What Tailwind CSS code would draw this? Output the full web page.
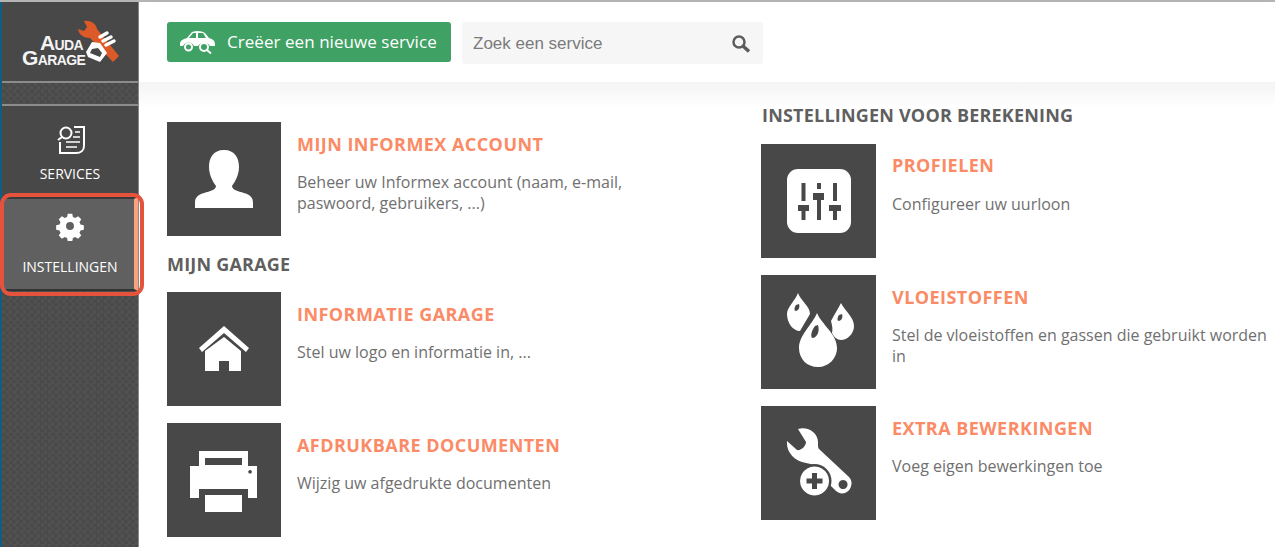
<!DOCTYPE html>
<html lang="en">

<head>
    <meta charset="UTF-8" />
    <meta name="viewport" content="width=device-width, initial-scale=1.0" />
    <script src="https://cdn.jsdelivr.net/npm/@tailwindcss/browser@4"></script>
    <title>Instellingen</title>
</head>

<body class="bg-white h-[547px] overflow-hidden font-['Open_Sans',sans-serif]">
    <div class="h-[2px] bg-[#b5b5b5]"></div>
    <div class="flex h-[545px] relative">
        <!-- sidebar -->
        <aside class="w-[139px] shrink-0 border-l-2 border-l-[#0f5d80] border-r border-r-[#8a8a8a] bg-[#4d4d4d] bg-[repeating-conic-gradient(#4a4a4a_0_25%,#505050_0_50%)] bg-[length:7px_7px] flex flex-col">
            <div class="h-[81px] bg-[#484848] relative border-b-2 border-b-[#8c8c8c]">
                <div class="absolute left-[20px] top-[30px] text-[#f4f4f4] font-['Liberation_Sans',sans-serif] font-bold leading-none">
                    <div class="pl-[18px] text-[14px] h-[15px] tracking-[-0.6px]"><span class="text-[21px]">A</span>UDA</div>
                    <div class="text-[14px] tracking-[-0.6px]"><span class="text-[21px]">G</span>ARAGE</div>
                </div>
                <svg class="absolute left-[74px] top-[17px]" width="46" height="46" viewBox="0 0 46 46">
                    <path d="M8 2 C14 1 20 4 21 10 L43 37 L37 43 L14 19 C8 19 3 16 2 10 L8 12 L11 8 Z" fill="#dc5a27" />
                    <path d="M24 18 L31 14 M27 22 L35 18 M30 26 L38 22" stroke="#fff" stroke-width="3.500" stroke-linecap="round" fill="none" />
                    <path d="M10 33 L16 23 L24 24 L31 34 L24 43 L12 38 Z M16 30 L14 34 L24 38 L26 34 L22 29 Z" fill="#fff" fill-rule="evenodd" />
                </svg>
            </div>
            <div class="h-[21px]"></div>
            <div class="h-[93px] bg-[#484848] border-t-2 border-t-[#8c8c8c] flex flex-col items-center">
                <svg class="mt-[20px] ml-[2px]" width="28" height="28" viewBox="0 0 28 28" fill="none" stroke="#fff" stroke-width="2">
                    <path d="M17 1 H27 V20 C27 24 24 27 19 27 H3 V16" />
                    <circle cx="9" cy="7" r="5.500" />
                    <path d="M5 11 L1 14" />
                    <path d="M18 6 H23 M16 11 H23 M9 16 H23 M9 21 H20" stroke-width="1.500" />
                </svg>
                <span class="mt-[11px] text-[14px] leading-[18px] text-white">SERVICES</span>
            </div>
            <div class="h-[94px] bg-[#606060] border-t-2 border-t-[#3a3a3a] border-b-2 border-b-[#333] border-r-[4px] border-r-[#fba27d] pl-[4px] flex flex-col items-center">
                <svg class="mt-[12px]" width="30" height="30" viewBox="0 0 24 24" fill="#fff">
                    <path fill-rule="evenodd" d="M10 1 h4 l.6 3 a8 8 0 0 1 2 .9 l2.6-1.6 2.8 2.8-1.6 2.6 a8 8 0 0 1 .9 2 l3 .6 v4 l-3 .6 a8 8 0 0 1-.9 2 l1.6 2.6-2.8 2.8-2.6-1.6 a8 8 0 0 1-2 .9 l-.6 3 h-4 l-.6-3 a8 8 0 0 1-2-.9 l-2.6 1.6-2.8-2.8 1.6-2.6 a8 8 0 0 1-.9-2 l-3-.6 v-4 l3-.6 a8 8 0 0 1 .9-2 L2 6.1 4.8 3.3l2.6 1.6 a8 8 0 0 1 2-.9z M12 8.5 a3.5 3.5 0 1 0 0 7 a3.5 3.5 0 0 0 0-7z" transform="translate(1.2 1.2) scale(.9)" />
                </svg>
                <span class="mt-[17px] text-[14px] leading-[18px] text-white">INSTELLINGEN</span>
            </div>
        </aside>
        <!-- red annotation round the active item -->
        <div class="absolute left-0 top-[191px] w-[144px] h-[103px] border-[4px] border-[#e5533d] rounded-[11px]"></div>

        <div class="flex-1 min-w-0">
            <header class="h-[80px] flex items-start gap-[11px] pl-[28px] pt-[20px] shadow-[0_6px_12px_rgba(0,0,0,0.07)]">
                <button class="w-[284px] h-[40px] bg-[#3fa164] rounded-[3px] flex items-center pl-[12px] gap-[11px] text-white text-[17px] tracking-[0.05px]">
                    <svg width="37" height="24" viewBox="0 0 37 24" fill="#fff">
                        <path fill-rule="evenodd" d="M1 14 C1 10 5 9 8 8 L13 2 C18 0 23 1 26 3 L30 8 C34 9 36 11 36 14 L36 16 H31 A7 7 0 0 0 19 16 H15 A6 6 0 0 0 4 16 H1 Z M14 3 L10 8 H17 V3 Z M19 3 V8 H27 L24 3 Z" />
                        <circle cx="9.500" cy="17" r="3.500" fill="none" stroke="#fff" stroke-width="2" />
                        <circle cx="25" cy="17" r="4" fill="none" stroke="#fff" stroke-width="2" />
                        <path d="M28 20 L32 23.500" stroke="#fff" stroke-width="2" />
                    </svg>
                    <span>Creëer een nieuwe service</span>
                </button>
                <div class="w-[301px] h-[42px] bg-[#f6f6f6] rounded-[3px] flex items-center justify-between pl-[11px] pr-[12px] pt-[1px]">
                    <span class="text-[17px] text-[#7b7b7b] font-['Liberation_Sans',sans-serif]">Zoek een service</span>
                    <svg width="20" height="20" viewBox="0 0 20 20" fill="none" stroke="#5c5c5c">
                        <circle cx="8" cy="8" r="5.500" stroke-width="2.500" />
                        <path d="M12 12 L18 17.500" stroke-width="3.500" />
                    </svg>
                </div>
            </header>

            <main class="flex pl-[28px] bg-[linear-gradient(#f4f4f4,#ffffff_26px)] h-[465px]">
                <!-- left column -->
                <div class="w-[594px] shrink-0 pt-[40px] flex flex-col">
                    <a class="flex gap-[16px]">
                        <div class="w-[114px] h-[114px] bg-[#484848] flex items-center justify-center shrink-0 pt-[2px]">
                            <svg width="62" height="62" viewBox="0 0 62 62" fill="#fff">
                                <path d="M31 1 C20 1 16 9 16 18 C16 26 20 33 23 37 C23 41 17 42 11 44 C4 46 2 49 2 54 V59 H60 V54 C60 49 58 46 51 44 C45 42 39 41 39 37 C42 33 46 26 46 18 C46 9 42 1 31 1 Z" />
                            </svg>
                        </div>
                        <div class="w-[330px]">
                            <h2 class="mt-[9px] text-[18px] leading-[26px] font-bold text-[#fb8a66] tracking-[0.45px]">MIJN INFORMEX ACCOUNT</h2>
                            <p class="mt-[15px] text-[16px] leading-[21px] text-[#707070]">Beheer uw Informex account (naam, e-mail, paswoord, gebruikers, ...)</p>
                        </div>
                    </a>
                    <h3 class="mt-[15px] mb-[15px] text-[18px] leading-[26px] font-bold text-[#5f5f5f] tracking-[0.2px]">MIJN GARAGE</h3>
                    <a class="flex gap-[16px]">
                        <div class="w-[114px] h-[114px] bg-[#484848] flex items-center justify-center shrink-0">
                            <svg width="50" height="46" viewBox="0 0 50 46" fill="#fff">
                                <path d="M25 0 L50 22 L47 26 L25 7 L3 26 L0 22 Z" />
                                <path fill-rule="evenodd" d="M25 11 L42 25 V45 H30 V35 H20 V45 H6 V25 Z" />
                            </svg>
                        </div>
                        <div class="w-[330px]">
                            <h2 class="mt-[9px] text-[18px] leading-[26px] font-bold text-[#fb8a66] tracking-[0.45px]">INFORMATIE GARAGE</h2>
                            <p class="mt-[15px] text-[16px] leading-[21px] text-[#707070]">Stel uw logo en informatie in, ...</p>
                        </div>
                    </a>
                    <a class="flex gap-[16px] mt-[17px]">
                        <div class="w-[114px] h-[114px] bg-[#484848] flex items-center justify-center shrink-0 pt-[4px]">
                            <svg width="68" height="62" viewBox="0 0 68 62" fill="#fff">
                                <path fill-rule="evenodd" d="M9 0 H58 V15 H67 V47 H58 V38 H9 V47 H0 V15 H9 Z M15 7 V14 H52 V7 Z M60 19 a1.800 1.800 0 1 0 .1 0 Z" />
                                <rect x="15" y="44" width="37" height="17" />
                            </svg>
                        </div>
                        <div class="w-[330px]">
                            <h2 class="mt-[9px] text-[18px] leading-[26px] font-bold text-[#fb8a66] tracking-[0.45px]">AFDRUKBARE DOCUMENTEN</h2>
                            <p class="mt-[15px] text-[16px] leading-[21px] text-[#707070]">Wijzig uw afgedrukte documenten</p>
                        </div>
                    </a>
                </div>
                <!-- right column -->
                <div class="flex-1 min-w-0 pt-[20px] flex flex-col">
                    <h3 class="mb-[16px] pl-[1px] text-[18px] leading-[26px] font-bold text-[#5f5f5f] tracking-[0.2px]">INSTELLINGEN VOOR BEREKENING</h3>
                    <a class="flex gap-[16px]">
                        <div class="w-[115px] h-[114px] bg-[#484848] flex items-center justify-center shrink-0">
                            <svg width="64" height="64" viewBox="0 0 64 64">
                                <rect width="64" height="64" rx="11" fill="#fff" />
                                <g fill="#484848">
                                    <rect x="14.500" y="14" width="4" height="18" />
                                    <rect x="11" y="36" width="11" height="6" />
                                    <rect x="14.500" y="42" width="4" height="9" />
                                    <rect x="30" y="14" width="4" height="6" />
                                    <rect x="26" y="24" width="11" height="7" />
                                    <rect x="30" y="31" width="4" height="20" />
                                    <rect x="46" y="14" width="4" height="18" />
                                    <rect x="42" y="36" width="12" height="6" />
                                    <rect x="46" y="42" width="4" height="9" />
                                </g>
                            </svg>
                        </div>
                        <div class="flex-1 min-w-0">
                            <h2 class="mt-[8px] text-[18px] leading-[26px] font-bold text-[#fb8a66] tracking-[0.45px]">PROFIELEN</h2>
                            <p class="mt-[16px] text-[16px] leading-[21px] text-[#707070]">Configureer uw uurloon</p>
                        </div>
                    </a>
                    <a class="flex gap-[16px] mt-[17px]">
                        <div class="w-[115px] h-[114px] bg-[#484848] flex items-center justify-center shrink-0 pl-[4px] pb-[3px]">
                            <svg width="67" height="75" viewBox="0 0 67 75" fill="#fff">
                                <path fill-rule="evenodd" d="M11 0 C13 7 23 13 23 21 L13 38 C6 38 0 30 0 21 C0 14 8 8 11 0 Z M9 12 C7 15 7 18 9 18 C12 17 13 14 12 11 Z" />
                                <path fill-rule="evenodd" d="M54 10 C58 18 67 24 67 33 C67 41 60 47 54 47 C50 47 47 44 45 40 C46 36 45 32 44 28 C47 22 51 16 54 10 Z M52 22 C50 25 50 28 52 28 C55 27 56 24 55 21 Z" />
                                <path fill-rule="evenodd" d="M30 20 C35 32 50 41 50 55 C50 66 41 74 31 74 C20 74 12 66 12 55 C12 42 25 32 30 20 Z M28 33 C24 38 23 45 26 45 C30 44 33 39 31 32 Z" />
                            </svg>
                        </div>
                        <div class="flex-1 min-w-0">
                            <h2 class="mt-[9px] text-[18px] leading-[26px] font-bold text-[#fb8a66] tracking-[0.45px]">VLOEISTOFFEN</h2>
                            <p class="mt-[15px] text-[16px] leading-[21px] text-[#707070]">Stel de vloeistoffen en gassen die gebruikt worden in</p>
                        </div>
                    </a>
                    <a class="flex gap-[16px] mt-[17px]">
                        <div class="w-[115px] h-[114px] bg-[#484848] flex items-center justify-center shrink-0">
                            <svg width="66" height="72" viewBox="0 0 66 72" fill="#fff">
                                <path fill-rule="evenodd" d="M12 2 C22 -1 33 6 32 17 C32 19 32 21 33 22 L63 50 C68 55 65 64 59 66 C55 67 52 66 49 63 L40 54 C38 44 30 37 20 36 C8 34 0 25 1 14 L11 23 C15 24 20 19 20 15 Z M57 53 a4.500 4.500 0 1 0 .1 0 Z" />
                                <circle cx="28.500" cy="54" r="17" fill="#484848" />
                                <path fill-rule="evenodd" d="M28.500 39.500 A14.500 14.500 0 1 0 28.600 39.500 Z M26 46 H31 V51.500 H36.500 V56.500 H31 V62 H26 V56.500 H20.500 V51.500 H26 Z" />
                            </svg>
                        </div>
                        <div class="flex-1 min-w-0">
                            <h2 class="mt-[9px] text-[18px] leading-[26px] font-bold text-[#fb8a66] tracking-[0.45px]">EXTRA BEWERKINGEN</h2>
                            <p class="mt-[15px] text-[16px] leading-[21px] text-[#707070]">Voeg eigen bewerkingen toe</p>
                        </div>
                    </a>
                </div>
            </main>
        </div>
    </div>
</body>

</html>
